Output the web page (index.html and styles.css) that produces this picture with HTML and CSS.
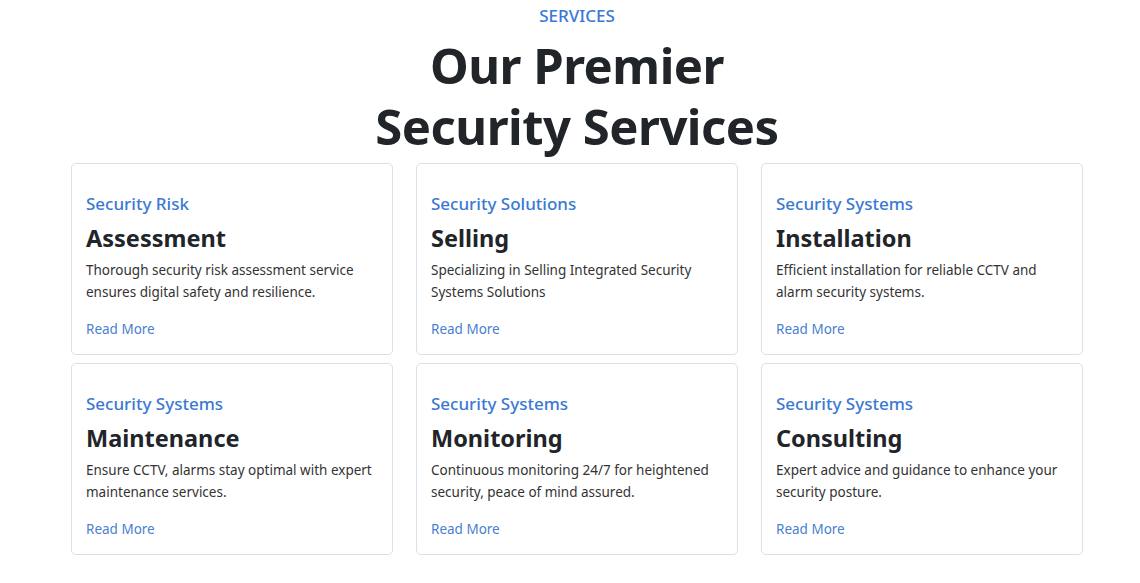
FILE: index.html
```html
<!DOCTYPE html>
<html lang="en">
<head>
<meta charset="utf-8">
<title>Services</title>
<link rel="stylesheet" href="styles.css">
</head>
<body>
<section class="services">
  <div class="eyebrow">SERVICES</div>
  <h1 class="title">Our Premier<br>Security Services</h1>
  <div class="grid">
    <div class="card">
      <div class="sub">Security Risk</div>
      <h2 class="name">Assessment</h2>
      <p class="desc">Thorough security risk assessment service ensures digital safety and resilience.</p>
      <a class="more" href="#">Read More</a>
    </div>
    <div class="card">
      <div class="sub">Security Solutions</div>
      <h2 class="name">Selling</h2>
      <p class="desc">Specializing in Selling Integrated Security Systems Solutions</p>
      <a class="more" href="#">Read More</a>
    </div>
    <div class="card">
      <div class="sub">Security Systems</div>
      <h2 class="name">Installation</h2>
      <p class="desc">Efficient installation for reliable CCTV and alarm security systems.</p>
      <a class="more" href="#">Read More</a>
    </div>
    <div class="card">
      <div class="sub">Security Systems</div>
      <h2 class="name">Maintenance</h2>
      <p class="desc">Ensure CCTV, alarms stay optimal with expert maintenance services.</p>
      <a class="more" href="#">Read More</a>
    </div>
    <div class="card">
      <div class="sub">Security Systems</div>
      <h2 class="name">Monitoring</h2>
      <p class="desc">Continuous monitoring 24/7 for heightened security, peace of mind assured.</p>
      <a class="more" href="#">Read More</a>
    </div>
    <div class="card">
      <div class="sub">Security Systems</div>
      <h2 class="name">Consulting</h2>
      <p class="desc">Expert advice and guidance to enhance your security posture.</p>
      <a class="more" href="#">Read More</a>
    </div>
  </div>
</section>
</body>
</html>
```
FILE: styles.css
```css
* { box-sizing: border-box; }
body {
  margin: 0;
  background: #fff;
  font-family: "Noto Sans", "Open Sans", sans-serif;
  color: #212529;
}
.services {
  width: 1012px;
  margin-left: 71px;
  padding-top: 5px;
  text-align: center;
}
.eyebrow {
  color: #3a79d3;
  font-size: 17px;
  font-weight: 500;
  line-height: 22px;
}
.title {
  margin: 8px 0 0;
  font-size: 49px;
  line-height: 61px;
  font-weight: 700;
  color: #212529;
  letter-spacing: -0.5px;
}
.grid {
  margin-top: 6px;
  display: grid;
  grid-template-columns: repeat(3, 322px);
  column-gap: 23px;
  row-gap: 8px;
  text-align: left;
}
.card {
  height: 192px;
  border: 1px solid #dcdfe3;
  border-radius: 5px;
  padding: 26px 14px 0;
}
.sub {
  color: #3a79d3;
  font-size: 17px;
  font-weight: 500;
  line-height: 28px;
}
.name {
  margin: 4px 0 0;
  font-size: 23.5px;
  line-height: 32px;
  font-weight: 700;
  color: #212529;
}
.desc {
  margin: 5px 0 0;
  font-size: 13.5px;
  line-height: 22px;
  color: #333;
}
.more {
  display: inline-block;
  margin-top: 15px;
  font-size: 13.5px;
  line-height: 22px;
  color: #4a80d0;
  text-decoration: none;
}
```
